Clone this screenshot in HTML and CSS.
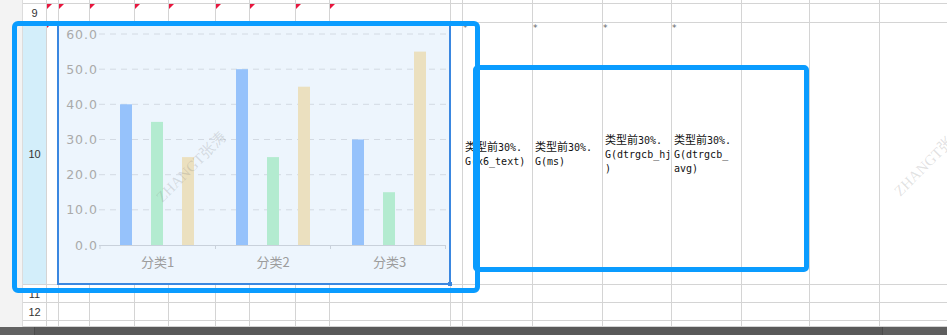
FILE: index.html
```html
<!DOCTYPE html>
<html lang="zh">
<head>
    <meta charset="UTF-8">
    <title>报表设计 - 图表</title>
    <link rel="stylesheet" href="styles.css">
</head>
<body>
    <div class="sheet">
        <!-- row 8 (cut off) -->
        <div class="gut"></div><div class="rh"></div>
        <div class="c"></div><div class="c"></div><div class="c"></div><div class="c"></div><div class="c"></div><div class="c"></div>
        <div class="c"></div><div class="c"></div><div class="c"></div><div class="c"></div><div class="c"></div><div class="c"></div>
        <div class="c"></div><div class="c"></div><div class="c"></div><div class="c"></div><div class="c"></div>

        <!-- row 9 -->
        <div class="gut"></div><div class="rh">9</div>
        <div class="c f"></div><div class="c f"></div><div class="c f"></div><div class="c f"></div><div class="c f"></div><div class="c f"></div>
        <div class="c f"></div><div class="c f"></div><div class="c f"></div><div class="c"></div><div class="c"></div><div class="c"></div>
        <div class="c"></div><div class="c"></div><div class="c"></div><div class="c"></div><div class="c"></div>

        <!-- row 10 -->
        <div class="gut"></div><div class="rh sel">10</div>
        <div class="c f"></div><div class="c"></div><div class="c"></div><div class="c"></div><div class="c"></div><div class="c"></div>
        <div class="c"></div><div class="c"></div><div class="c"></div><div class="c"></div>
        <div class="c t m"><p><span class="cn">类型前</span>30%.<br>G(x6_text)</p></div>
        <div class="c t m"><p><span class="cn">类型前</span>30%.<br>G(ms)</p></div>
        <div class="c t m"><p><span class="cn">类型前</span>30%.<br>G(dtrgcb_hj<br>)</p></div>
        <div class="c t m"><p><span class="cn">类型前</span>30%.<br>G(dtrgcb_<br>avg)</p></div>
        <div class="c"></div><div class="c"></div><div class="c"></div>

        <!-- row 11 -->
        <div class="gut"></div><div class="rh">11</div>
        <div class="c"></div><div class="c"></div><div class="c"></div><div class="c"></div><div class="c"></div><div class="c"></div>
        <div class="c"></div><div class="c"></div><div class="c"></div><div class="c"></div><div class="c"></div><div class="c"></div>
        <div class="c"></div><div class="c"></div><div class="c"></div><div class="c"></div><div class="c"></div>

        <!-- row 12 -->
        <div class="gut"></div><div class="rh">12</div>
        <div class="c"></div><div class="c"></div><div class="c"></div><div class="c"></div><div class="c"></div><div class="c"></div>
        <div class="c"></div><div class="c"></div><div class="c"></div><div class="c"></div><div class="c"></div><div class="c"></div>
        <div class="c"></div><div class="c"></div><div class="c"></div><div class="c"></div><div class="c"></div>

        <!-- row 13 (cut off) -->
        <div class="gut"></div><div class="rh cut">13</div>
        <div class="c"></div><div class="c"></div><div class="c"></div><div class="c"></div><div class="c"></div><div class="c"></div>
        <div class="c"></div><div class="c"></div><div class="c"></div><div class="c"></div><div class="c"></div><div class="c"></div>
        <div class="c"></div><div class="c"></div><div class="c"></div><div class="c"></div><div class="c"></div>

        <!-- Floating chart -->
        <div class="chart">
            <svg width="390" height="259" viewBox="0 0 390 259">
                <g class="grid">
                    <line x1="40" y1="10" x2="387" y2="10"></line>
                    <line x1="40" y1="45.2" x2="387" y2="45.2"></line>
                    <line x1="40" y1="80.3" x2="387" y2="80.3"></line>
                    <line x1="40" y1="115.5" x2="387" y2="115.5"></line>
                    <line x1="40" y1="150.7" x2="387" y2="150.7"></line>
                    <line x1="40" y1="185.8" x2="387" y2="185.8"></line>
                </g>
                <g class="ylab">
                    <text x="39" y="14.5">60.0</text>
                    <text x="39" y="49.7">50.0</text>
                    <text x="39" y="84.8">40.0</text>
                    <text x="39" y="120">30.0</text>
                    <text x="39" y="155.2">20.0</text>
                    <text x="39" y="190.3">10.0</text>
                    <text x="39" y="225.5">0.0</text>
                </g>
                <!-- 分类1 -->
                <rect class="b1" x="61" y="80.3" width="12" height="140.7"></rect>
                <rect class="b2" x="92" y="97.9" width="12" height="123.1"></rect>
                <rect class="b3" x="123" y="133.1" width="12" height="87.9"></rect>
                <!-- 分类2 -->
                <rect class="b1" x="177" y="45.2" width="12" height="175.8"></rect>
                <rect class="b2" x="208" y="133.1" width="12" height="87.9"></rect>
                <rect class="b3" x="239" y="62.7" width="12" height="158.3"></rect>
                <!-- 分类3 -->
                <rect class="b1" x="293" y="115.5" width="12" height="105.5"></rect>
                <rect class="b2" x="324" y="168.2" width="12" height="52.8"></rect>
                <rect class="b3" x="355" y="27.6" width="12" height="193.4"></rect>
                <g class="axis">
                    <line x1="40" y1="221.5" x2="387" y2="221.5"></line>
                    <line x1="41" y1="221.5" x2="41" y2="225"></line>
                    <line x1="156.5" y1="221.5" x2="156.5" y2="225"></line>
                    <line x1="271.5" y1="221.5" x2="271.5" y2="225"></line>
                    <line x1="386.5" y1="221.5" x2="386.5" y2="225"></line>
                </g>
                <g class="xlab">
                    <text x="98.7" y="243">分类1</text>
                    <text x="214" y="243">分类2</text>
                    <text x="330.5" y="243">分类3</text>
                </g>
            </svg>
        </div>

        <div class="wm wm-chart">ZHANGT张涛</div>
        <div class="wm wm-right">ZHANGT张涛</div>

        <!-- Selection highlights -->
        <div class="hl hl-chart"></div>
        <div class="hl hl-cells"></div>
    </div>

    <!-- Sheet tab bar -->
    <div class="tabs">
        <div class="tab-first"></div>
        <div class="tab-fill"></div>
        <div class="tab-end"></div>
    </div>
</body>
</html>
```

FILE: styles.css
```css
html, body {
    margin: 0;
    padding: 0;
    background: #fff;
    overflow: hidden;
}
body {
    width: 947px;
    height: 335px;
    font-family: "Liberation Sans", Arial, sans-serif;
}

/* Spreadsheet grid */
.sheet {
    position: relative;
    display: grid;
    grid-template-columns: 23px 24px 12px 31px 45px 34px 47px 34px 46px 34px 121px 12px 70px 70px 69px 70px 68px 70px 70px;
    grid-template-rows: 4px 19px 262px 18px 18px 6px;
    width: 947px;
    overflow: hidden;
}
.gut {
    background: #f3f3f3;
    border-right: 1px solid #dcdcdc;
}
.rh {
    display: flex;
    align-items: center;
    justify-content: center;
    border-right: 1px solid #d4d4d4;
    border-bottom: 1px solid #d4d4d4;
    font-size: 11px;
    color: #333;
    overflow: hidden;
}
.rh.sel {
    background: #d3eefa;
}
.rh.cut {
    align-items: flex-start;
    line-height: 18px;
}
.c {
    position: relative;
    border-right: 1px solid #d4d4d4;
    border-bottom: 1px solid #d4d4d4;
    overflow: hidden;
}

/* red comment flag in the cell corner */
.c.f::before {
    content: "";
    position: absolute;
    left: 0;
    top: 0;
    width: 5px;
    height: 5px;
    background: #e8163e;
    clip-path: polygon(0 0, 100% 0, 0 100%);
}

/* small marker for bound data cells */
.c.m::after {
    content: "*";
    position: absolute;
    left: 0;
    top: 1px;
    font-family: "DejaVu Sans", sans-serif;
    font-size: 9px;
    line-height: 9px;
    color: #666;
}

.t {
    display: flex;
    align-items: center;
    padding-left: 2px;
}
.t p {
    margin: 0;
    font-family: "DejaVu Sans Mono", "Noto Sans CJK SC", monospace;
    font-size: 10px;
    line-height: 14px;
    color: #111;
    white-space: nowrap;
}
.t .cn {
    font-family: "Noto Sans CJK SC", sans-serif;
    font-size: 11px;
}

/* Chart floating over the cells */
.chart {
    position: absolute;
    left: 57px;
    top: 22px;
    width: 394px;
    height: 263px;
    box-sizing: border-box;
    border: 2px solid #3a87e0;
    background: #edf5fd;
}
.chart::after {
    content: "";
    position: absolute;
    right: -3px;
    bottom: -3px;
    width: 4px;
    height: 4px;
    background: #3a87e0;
}
.chart svg {
    display: block;
}
.grid line {
    stroke: #d3dae3;
    stroke-width: 1;
    stroke-dasharray: 6 5;
}
.axis line {
    stroke: #c9d1db;
    stroke-width: 1;
}
.ylab text {
    font-family: "DejaVu Sans", sans-serif;
    font-size: 12.5px;
    letter-spacing: 1px;
    fill: #aaa;
    text-anchor: end;
}
.xlab text {
    font-family: "Noto Sans CJK SC", sans-serif;
    font-size: 13px;
    fill: #9c9c9c;
    text-anchor: middle;
}
.b1 { fill: #96c2fb; }
.b2 { fill: #b3ebd0; }
.b3 { fill: #ebe0bf; }

/* watermark */
.wm {
    position: absolute;
    font-family: "Liberation Serif", "Noto Sans CJK SC", serif;
    font-size: 15px;
    color: rgba(120, 120, 120, 0.22);
    white-space: nowrap;
    transform: translate(-50%, -50%) rotate(-45deg);
}
.wm-chart {
    left: 190px;
    top: 166px;
}
.wm-right {
    left: 928px;
    top: 160px;
}

/* Selection highlight boxes */
.hl {
    position: absolute;
    box-sizing: border-box;
    border: 5px solid #0a9cff;
    border-radius: 6px;
}
.hl-chart {
    left: 12px;
    top: 21px;
    width: 468px;
    height: 272px;
}
.hl-cells {
    left: 473px;
    top: 65px;
    width: 336px;
    height: 207px;
    border-radius: 5px;
}

/* Bottom tab bar */
.tabs {
    display: flex;
    height: 8px;
    background: #595959;
}
.tab-first {
    width: 34px;
    background: #626262;
    border-right: 1px solid #4c4c4c;
}
.tab-fill {
    flex: 1;
}
.tab-end {
    width: 64px;
    background: #5f5f5f;
    border-left: 1px solid #4c4c4c;
}
```
